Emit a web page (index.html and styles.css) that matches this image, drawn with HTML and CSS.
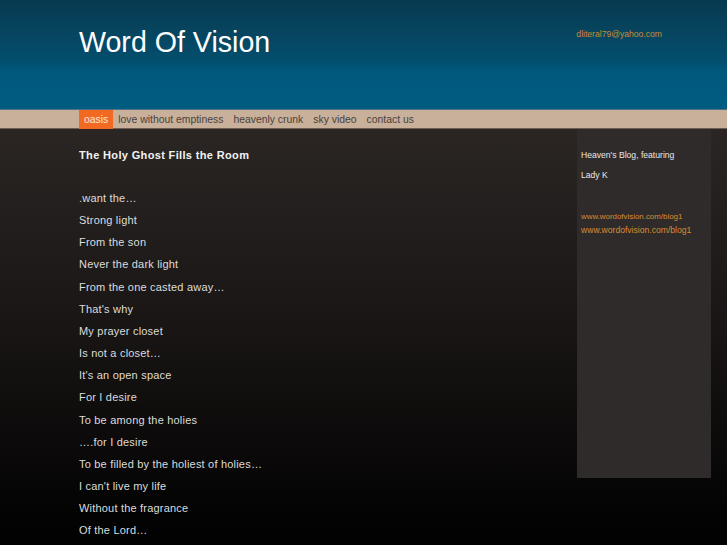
FILE: index.html
```html
<!DOCTYPE html>
<html>
<head>
<meta charset="utf-8">
<title>Word Of Vision</title>
<link rel="stylesheet" href="styles.css">
</head>
<body>
<header class="header">
  <h1 class="site-title">Word Of Vision</h1>
  <a class="email" href="#">dliteral79@yahoo.com</a>
</header>
<nav class="nav">
  <a class="nav-item active" href="#">oasis</a>
  <a class="nav-item" href="#">love without emptiness</a>
  <a class="nav-item" href="#">heavenly crunk</a>
  <a class="nav-item" href="#">sky video</a>
  <a class="nav-item" href="#">contact us</a>
</nav>
<div class="page">
  <main class="main">
    <h2 class="post-title">The Holy Ghost Fills the Room</h2>
    <div class="poem">
      <p>.want the…</p>
      <p>Strong light</p>
      <p>From the son</p>
      <p>Never the dark light</p>
      <p>From the one casted away…</p>
      <p>That's why</p>
      <p>My prayer closet</p>
      <p>Is not a closet…</p>
      <p>It's an open space</p>
      <p>For I desire</p>
      <p>To be among the holies</p>
      <p>….for I desire</p>
      <p>To be filled by the holiest of holies…</p>
      <p>I can't live my life</p>
      <p>Without the fragrance</p>
      <p>Of the Lord…</p>
    </div>
  </main>
  <aside class="sidebar">
    <p class="side-text">Heaven's Blog, featuring</p>
    <p class="side-text">Lady K</p>
    <div class="side-links">
      <a class="side-link small" href="#">www.wordofvision.com/blog1</a>
      <a class="side-link" href="#">www.wordofvision.com/blog1</a>
    </div>
  </aside>
</div>
</body>
</html>
```
FILE: styles.css
```css
html, body {
  margin: 0;
  padding: 0;
}
body {
  width: 727px;
  height: 545px;
  overflow: hidden;
  font-family: "Liberation Sans", Arial, sans-serif;
  background: linear-gradient(#2e2826 0px, #2b2624 130px, #181514 330px, #0b0909 450px, #030303 520px, #020202);
}
.header {
  height: 109px;
  display: flex;
  justify-content: space-between;
  align-items: flex-start;
  padding: 0 65px 0 79px;
  background: linear-gradient(#063a50 0px, #07445e 30px, #034e6d 60px, #01597d 72px, #005c81 109px);
}
.site-title {
  margin: 26px 0 0 0;
  font-size: 28.6px;
  font-weight: normal;
  color: #ffffff;
  line-height: 32px;
}
.email {
  margin-top: 29px;
  font-size: 8.6px;
  color: #c98a35;
  text-decoration: none;
  line-height: 10px;
}
.nav {
  display: flex;
  height: 18px;
  padding-left: 79px;
  background: #c8b09a;
  border-top: 1px solid #4a7186;
  border-bottom: 1px solid #6e5d51;
  font-size: 10.4px;
}
.nav-item {
  display: flex;
  align-items: center;
  padding: 0 5px;
  color: #4a423c;
  text-decoration: none;
}
.nav-item.active {
  background: #f26a22;
  color: #fbe6d8;
  height: 19px;
}
.page {
  display: flex;
  padding-left: 79px;
}
.main {
  flex: 1;
}
.post-title {
  margin: 19px 0 0 0;
  font-size: 11px;
  font-weight: bold;
  letter-spacing: 0.35px;
  color: #f2f2f2;
  line-height: 14px;
}
.poem {
  margin-top: 25px;
}
.poem p {
  margin: 0;
  font-size: 11px;
  line-height: 22.15px;
  letter-spacing: 0.2px;
  color: #dcdcdc;
}
.sidebar {
  width: 126px;
  height: 328px;
  margin: 0 16px 0 0;
  padding: 21px 4px 0 4px;
  background: #2f2b2a;
}
.side-text {
  margin: 0 0 10px 0;
  font-size: 8.6px;
  line-height: 10px;
  color: #e8e8e8;
}
.side-links {
  margin-top: 31px;
  display: flex;
  flex-direction: column;
}
.side-link {
  font-size: 8.6px;
  line-height: 12.5px;
  color: #d98c33;
  text-decoration: none;
  white-space: nowrap;
}
.side-link.small {
  font-size: 7.9px;
}
```
